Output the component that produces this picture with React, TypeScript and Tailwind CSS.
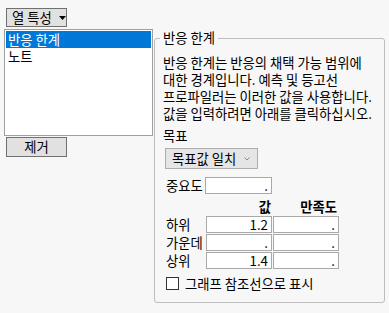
import React from "react";

export default function App() {
  const rows = [
    { label: "하위", v: "1.2", s: "." },
    { label: "가운데", v: ".", s: "." },
    { label: "상위", v: "1.4", s: "." },
  ];
  return (
    <div className="w-[389px] h-[313px] bg-[#f7f7f7] font-['Noto_Sans_CJK_KR',sans-serif] text-[13.33px] text-black overflow-hidden">
      <div className="pt-[8px] pl-[6px]">
        <button className="h-[19px] w-[61px] border border-[#707070] bg-[#e1e1e1] flex items-center pl-[5px] leading-[16px]">
          <span>열 특성</span>
          <svg width="7" height="4" viewBox="0 0 7 4" className="ml-[7px]">
            <polygon points="0,0 7,0 3.5,4" fill="#000" />
          </svg>
        </button>
      </div>
      <div className="flex mt-[2px]">
        <div className="ml-[4px] w-[149px] flex flex-col">
          <div className="h-[107px] border border-[#a0a0a0] bg-white p-[1px]">
            <div className="h-[17px] bg-[#0078d7] text-white pl-[2px] leading-[17px]">반응 한계</div>
            <div className="h-[17px] pl-[2px] leading-[17px]">노트</div>
          </div>
          <button className="mt-[1px] ml-[2px] w-[61px] h-[20px] border border-[#707070] bg-[#e1e1e1] leading-[18px]">
            제거
          </button>
        </div>
        <div className="ml-[1px] mt-[9px] w-[231px] h-[265px] relative border border-[#bdbdbd] rounded-[3px]">
          <div className="absolute top-[-9px] left-[5px] px-[3px] bg-[#f7f7f7] leading-[16px]">반응 한계</div>
          <div className="pt-[15px] pl-[8px]">
            <p className="leading-[17px] whitespace-nowrap">
              반응 한계는 반응의 채택 가능 범위에
              <br />
              대한 경계입니다. 예측 및 등고선
              <br />
              프로파일러는 이러한 값을 사용합니다.
              <br />
              값을 입력하려면 아래를 클릭하십시오.
            </p>
            <div className="mt-[5px] leading-[17px]">목표</div>
            <div className="mt-[4px] ml-[2px] w-[93px] h-[21px] border border-[#adadad] bg-[#e5e5e5] flex items-center pl-[6px] leading-[16px]">
              <span>목표값 일치</span>
              <svg width="6" height="4" viewBox="0 0 6 4" className="ml-[8px]">
                <polyline points="0.5,0.5 3,3 5.5,0.5" fill="none" stroke="#888" strokeWidth="1" />
              </svg>
            </div>
            <div className="pl-[3px]">
              <div className="mt-[8px] grid grid-cols-[39px_67px] items-center">
                <span className="leading-[16px]">중요도</span>
                <div className="h-[17px] border border-[#a9a9a9] bg-white text-right pr-[3px] leading-[15px]">.</div>
              </div>
              <div className="mt-[5px] grid grid-cols-[39px_66px_66px] gap-x-[1px]">
                <span />
                <span className="text-right pr-[1px] font-bold leading-[16px]">값</span>
                <span className="text-right pr-[2px] font-bold leading-[16px]">만족도</span>
              </div>
              <div className="mt-[1px] grid grid-cols-[39px_66px_66px] gap-x-[1px] gap-y-[1px]">
                {rows.map((r) => (
                  <React.Fragment key={r.label}>
                    <span className="leading-[17px] whitespace-nowrap">{r.label}</span>
                    <div className="h-[17px] border border-[#a9a9a9] bg-white text-right pr-[3px] leading-[15px]">{r.v}</div>
                    <div className="h-[17px] border border-[#a9a9a9] bg-white text-right pr-[3px] leading-[15px]">{r.s}</div>
                  </React.Fragment>
                ))}
              </div>
              <div className="mt-[8px] flex items-center">
                <div className="w-[13px] h-[13px] border border-[#333333] bg-white" />
                <span className="ml-[6px] leading-[13px]">그래프 참조선으로 표시</span>
              </div>
            </div>
          </div>
        </div>
      </div>
    </div>
  );
}
